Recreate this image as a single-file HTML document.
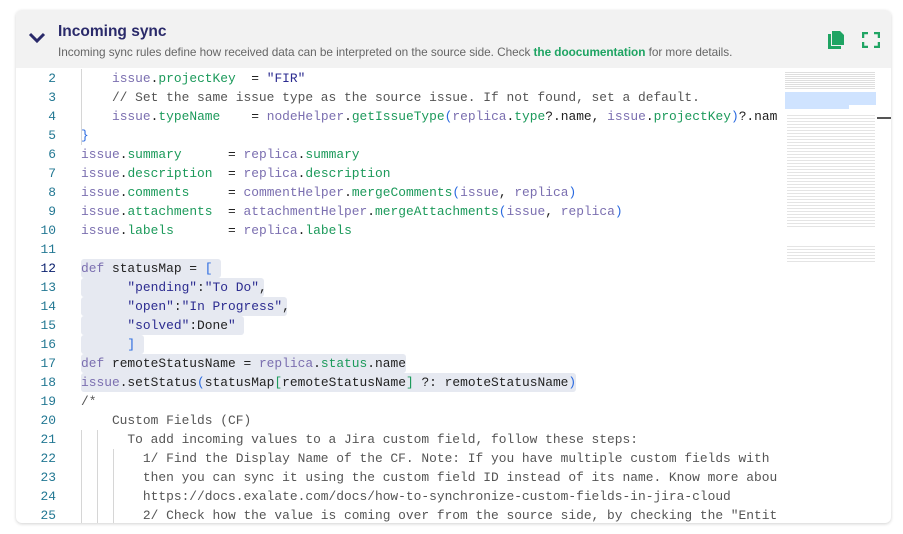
<!DOCTYPE html>
<html><head><style>
body{margin:0;width:903px;height:534px;background:#fff;overflow:hidden;position:relative;font-family:"Liberation Sans",sans-serif}
.card{position:absolute;left:16px;top:10px;width:875px;height:513px;border-radius:6px;box-shadow:0 1px 3px rgba(0,0,0,.18);overflow:hidden;background:#fff}
.hdr{position:absolute;left:0;top:0;width:875px;height:58px;background:#f2f2f2}
.title{position:absolute;left:42px;top:13px;font-size:15.5px;font-weight:bold;color:#2a2a6a}
.sub{position:absolute;left:42px;top:35px;font-size:11.8px;color:#666;letter-spacing:-0.05px}
.sub b{color:#1fa463}
.code{position:absolute;left:0;top:59px;width:760px;height:460px;font-family:"Liberation Mono","DejaVu Sans Mono",monospace;font-size:12.9px}
.ln{position:absolute;left:0;width:40px;text-align:right;color:#237893;height:19px;line-height:19px}
.l{position:absolute;left:65px;height:19px;line-height:19px;white-space:pre;color:#222}
.sel{position:absolute;background:#e6e9f1;height:19px;border-radius:3px}
.p{color:#7b6fb0}.g{color:#1c9a5b}.s{color:#2c2c90}.c{color:#555}.b{color:#2a6ae0}
.guide{position:absolute;width:1px;background:#d6d6d6}
.mm{position:absolute;left:761px;top:59px;width:99px;height:455px;background:#fff}
</style></head><body>
<div class="card">
<div class="hdr">
<svg style="position:absolute;left:12px;top:22px" width="18" height="12" viewBox="0 0 18 12"><path d="M2 2 L9 9 L16 2" stroke="#2a2a6a" stroke-width="3" fill="none"/></svg>
<div class="title">Incoming sync</div>
<div class="sub">Incoming sync rules define how received data can be interpreted on the source side. Check <b>the doocumentation</b> for more details.</div>
<svg style="position:absolute;left:811px;top:20px" width="18" height="20" viewBox="0 0 18 20"><path d="M1 4h3v12h10v3H1z" fill="#1fa463"/><path d="M5 1h8l4 4v10H5z" fill="#1fa463"/></svg>
<svg style="position:absolute;left:846px;top:22px" width="18" height="16" viewBox="0 0 18 16" fill="none" stroke="#1fa463" stroke-width="2.5"><path d="M1 6V1h5M12 1h5v5M17 10v5h-5M6 15H1v-5"/></svg>
</div>
<div class="code">
<div class="guide" style="left:65px;top:0;height:76px"></div>
<div class="guide" style="left:65px;top:361px;height:100px"></div>
<div class="guide" style="left:81px;top:361px;height:100px"></div>
<div class="guide" style="left:97px;top:380px;height:80px"></div>
<div class="sel" style="left:65px;top:190px;width:140px"></div>
<div class="sel" style="left:65px;top:209px;width:183px"></div>
<div class="sel" style="left:65px;top:228px;width:206px"></div>
<div class="sel" style="left:65px;top:247px;width:163px"></div>
<div class="sel" style="left:65px;top:266px;width:63px"></div>
<div class="sel" style="left:65px;top:285px;width:325px"></div>
<div class="sel" style="left:65px;top:304px;width:495px"></div>
<div class="ln" style="top:0">2</div><div class="l" style="top:0">    <span class="p">issue</span>.<span class="g">projectKey</span>  = <span class="s">"FIR"</span></div>
<div class="ln" style="top:19px">3</div><div class="l c" style="top:19px">    // Set the same issue type as the source issue. If not found, set a default.</div>
<div class="ln" style="top:38px">4</div><div class="l" style="top:38px">    <span class="p">issue</span>.<span class="g">typeName</span>    = <span class="p">nodeHelper</span>.<span class="g">getIssueType</span><span class="b">(</span><span class="p">replica</span>.<span class="g">type</span>?.name, <span class="p">issue</span>.<span class="g">projectKey</span><span class="b">)</span>?.name</div>
<div class="ln" style="top:57px">5</div><div class="l b" style="top:57px">}</div>
<div class="ln" style="top:76px">6</div><div class="l" style="top:76px"><span class="p">issue</span>.<span class="g">summary</span>      = <span class="p">replica</span>.<span class="g">summary</span></div>
<div class="ln" style="top:95px">7</div><div class="l" style="top:95px"><span class="p">issue</span>.<span class="g">description</span>  = <span class="p">replica</span>.<span class="g">description</span></div>
<div class="ln" style="top:114px">8</div><div class="l" style="top:114px"><span class="p">issue</span>.<span class="g">comments</span>     = <span class="p">commentHelper</span>.<span class="g">mergeComments</span><span class="b">(</span><span class="p">issue</span>, <span class="p">replica</span><span class="b">)</span></div>
<div class="ln" style="top:133px">9</div><div class="l" style="top:133px"><span class="p">issue</span>.<span class="g">attachments</span>  = <span class="p">attachmentHelper</span>.<span class="g">mergeAttachments</span><span class="b">(</span><span class="p">issue</span>, <span class="p">replica</span><span class="b">)</span></div>
<div class="ln" style="top:152px">10</div><div class="l" style="top:152px"><span class="p">issue</span>.<span class="g">labels</span>       = <span class="p">replica</span>.<span class="g">labels</span></div>
<div class="ln" style="top:171px">11</div>
<div class="ln" style="top:190px;color:#0b216f">12</div><div class="l" style="top:190px"><span class="p">def</span> statusMap = <span class="b">[</span></div>
<div class="ln" style="top:209px">13</div><div class="l" style="top:209px">      <span class="s">"pending"</span>:<span class="s">"To Do"</span>,</div>
<div class="ln" style="top:228px">14</div><div class="l" style="top:228px">      <span class="s">"open"</span>:<span class="s">"In Progress"</span>,</div>
<div class="ln" style="top:247px">15</div><div class="l" style="top:247px">      <span class="s">"solved"</span>:Done<span class="s">"</span></div>
<div class="ln" style="top:266px">16</div><div class="l" style="top:266px">      <span class="b">]</span></div>
<div class="ln" style="top:285px">17</div><div class="l" style="top:285px"><span class="p">def</span> remoteStatusName = <span class="p">replica</span>.<span class="g">status</span>.name</div>
<div class="ln" style="top:304px">18</div><div class="l" style="top:304px"><span class="p">issue</span>.setStatus<span class="b">(</span>statusMap<span class="g">[</span>remoteStatusName<span class="g">]</span> ?: remoteStatusName<span class="b">)</span></div>
<div class="ln" style="top:323px">19</div><div class="l c" style="top:323px">/*</div>
<div class="ln" style="top:342px">20</div><div class="l c" style="top:342px">    Custom Fields (CF)</div>
<div class="ln" style="top:361px">21</div><div class="l c" style="top:361px">      To add incoming values to a Jira custom field, follow these steps:</div>
<div class="ln" style="top:380px">22</div><div class="l c" style="top:380px">        1/ Find the Display Name of the CF. Note: If you have multiple custom fields with the</div>
<div class="ln" style="top:399px">23</div><div class="l c" style="top:399px">        then you can sync it using the custom field ID instead of its name. Know more about</div>
<div class="ln" style="top:418px">24</div><div class="l c" style="top:418px">        https://docs.exalate.com/docs/how-to-synchronize-custom-fields-in-jira-cloud</div>
<div class="ln" style="top:437px">25</div><div class="l c" style="top:437px">        2/ Check how the value is coming over from the source side, by checking the "Entity</div>
</div>
<div class="mm">
<div style="position:absolute;left:8px;top:2px;width:90px;height:18px;background:repeating-linear-gradient(#fff 0 1px,#c8c8c8 1px 2px);opacity:.6"></div>
<div style="position:absolute;left:8px;top:23px;width:91px;height:13px;background:#cfe3ff"></div>
<div style="position:absolute;left:8px;top:36px;width:64px;height:4px;background:#cfe3ff"></div>
<div style="position:absolute;left:100px;top:48px;width:14px;height:2px;background:#555"></div>
<div style="position:absolute;left:10px;top:44px;width:88px;height:115px;background:repeating-linear-gradient(#fff 0 2px,#d8d8d8 2px 3px);opacity:.7"></div>
<div style="position:absolute;left:10px;top:175px;width:88px;height:20px;background:repeating-linear-gradient(#fff 0 2px,#d8d8d8 2px 3px);opacity:.7"></div>
</div>
</div>
</body></html>
